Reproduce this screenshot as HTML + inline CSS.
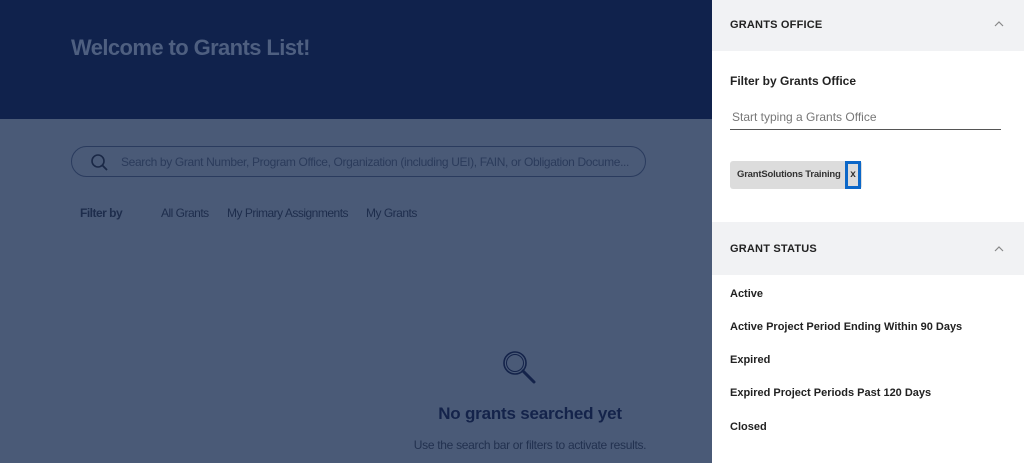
<!DOCTYPE html>
<html><head><style>
*{margin:0;padding:0;box-sizing:border-box}
body{width:1024px;height:463px;overflow:hidden;position:relative;font-family:"Liberation Sans",sans-serif;background:#4a5a77}
.hdr{position:absolute;left:0;top:0;width:712px;height:119px;background:#10224c}
.hdr h1{position:absolute;left:71px;top:35px;font-size:22px;font-weight:bold;color:#4e5f80;letter-spacing:-0.6px}
.search{position:absolute;left:71px;top:146px;width:575px;height:31px;border:1px solid #2a3b5e;border-radius:16px}
.search span{position:absolute;left:49px;top:8px;font-size:12px;color:#2b3b5b;white-space:nowrap;letter-spacing:-0.35px}
.fb{position:absolute;top:206px;font-size:12px;color:#1e2d4c;letter-spacing:-0.5px}
.empty{position:absolute;left:380px;width:300px;text-align:center;color:#14234a}
.panel{position:absolute;left:712px;top:0;width:312px;height:463px;background:#fff}
.sec{position:absolute;left:0;width:312px;background:#f1f2f4}
.sec b{position:absolute;left:18px;font-size:11px;color:#222;letter-spacing:0.2px}
.car{position:absolute;right:20px}
.item{position:absolute;left:18px;font-size:11px;font-weight:bold;color:#222}
</style></head><body>
<div class="hdr"><h1>Welcome to Grants List!</h1></div>
<div class="search">
<svg style="position:absolute;left:18px;top:6px" width="20" height="20" viewBox="0 0 20 20"><circle cx="8" cy="8" r="6" fill="none" stroke="#1a2846" stroke-width="1.6"/><line x1="12.3" y1="12.3" x2="17" y2="17" stroke="#1a2846" stroke-width="1.8"/></svg>
<span>Search by Grant Number, Program Office, Organization (including UEI), FAIN, or Obligation Docume...</span></div>
<div class="fb" style="left:80px;font-weight:bold">Filter by</div>
<div class="fb" style="left:161px">All Grants</div>
<div class="fb" style="left:227px">My Primary Assignments</div>
<div class="fb" style="left:366px">My Grants</div>
<svg style="position:absolute;left:501px;top:349px" width="38" height="36" viewBox="0 0 38 36"><circle cx="14" cy="14" r="11" fill="none" stroke="#14234a" stroke-width="1.6"/><circle cx="14" cy="14" r="8.5" fill="none" stroke="#14234a" stroke-width="1"/><line x1="22" y1="22" x2="33" y2="33" stroke="#14234a" stroke-width="3" stroke-linecap="round"/></svg>
<div class="empty" style="top:404px;font-size:17px;font-weight:bold;letter-spacing:-0.2px">No grants searched yet</div>
<div class="empty" style="top:438px;font-size:12px;color:#22314f;letter-spacing:-0.3px">Use the search bar or filters to activate results.</div>
<div class="panel">
<div class="sec" style="top:0;height:51px"><b style="top:19px">GRANTS OFFICE</b><svg class="car" style="top:21px" width="10" height="6" viewBox="0 0 10 6"><path d="M1 5L5 1L9 5" fill="none" stroke="#888" stroke-width="1.2"/></svg></div>
<div style="position:absolute;left:18px;top:74px;font-size:12px;font-weight:bold;color:#222">Filter by Grants Office</div>
<div style="position:absolute;left:18px;top:110px;width:271px;height:20px;border-bottom:1.5px solid #555;font-size:12px;color:#777;padding-left:2px">Start typing a Grants Office</div>
<div style="position:absolute;left:18px;top:161px;width:132px;height:28px;background:#dcdcdc;border-radius:3px"></div>
<div style="position:absolute;left:25px;top:169px;font-size:9.5px;font-weight:bold;color:#333;letter-spacing:-0.2px;white-space:nowrap">GrantSolutions Training</div>
<div style="position:absolute;left:133px;top:161px;width:16px;height:28px;border:3px solid #0b67c8;background:#dcdcdc;font-size:10px;font-weight:bold;color:#333;text-align:center;line-height:21px">x</div>
<div class="sec" style="top:222px;height:53px"><b style="top:21px">GRANT STATUS</b><svg class="car" style="top:24px" width="10" height="6" viewBox="0 0 10 6"><path d="M1 5L5 1L9 5" fill="none" stroke="#888" stroke-width="1.2"/></svg></div>
<div class="item" style="top:288px">Active</div>
<div class="item" style="top:321px">Active Project Period Ending Within 90 Days</div>
<div class="item" style="top:354px">Expired</div>
<div class="item" style="top:387px">Expired Project Periods Past 120 Days</div>
<div class="item" style="top:421px">Closed</div>
</div>
</body></html>
